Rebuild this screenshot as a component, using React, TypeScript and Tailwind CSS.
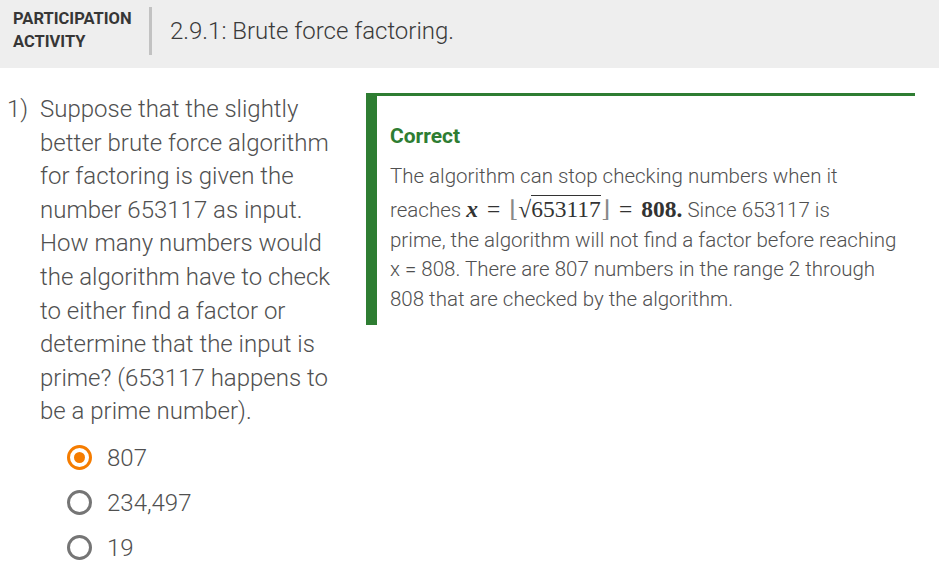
export default function App() {
  const options = [
    { label: '807', selected: true },
    { label: '234,497', selected: false },
    { label: '19', selected: false },
  ]

  return (
    <div className="w-[939px] h-[562px] bg-white overflow-hidden" style={{ fontFamily: 'Roboto, "Liberation Sans", sans-serif' }}>
      {/* Header */}
      <div className="h-[68px] bg-[#eeeeee] flex items-start">
        <div className="pl-[13px] pt-[7px] text-[16.5px] leading-[23px] font-bold text-[#363636] w-[149px]">
          PARTICIPATION
          <br />
          ACTIVITY
        </div>
        <div className="mt-[7px] w-[3px] h-[48px] bg-[#c2c2c2]" />
        <div className="ml-[18px] pt-[16px] text-[24px] leading-[30px] font-light text-[#3a3a3a]">
          2.9.1: Brute force factoring.
        </div>
      </div>

      {/* Body */}
      <div className="flex mt-[25px]">
        <div className="w-[366px] shrink-0 flex">
          <div className="w-[40px] pl-[7px] text-[24px] leading-[33.6px] font-light text-[#505050]">1)</div>
          <div className="w-[302px]">
            <p className="text-[24px] leading-[33.6px] font-light text-[#505050]">
              Suppose that the slightly better brute force algorithm for factoring is given the number 653117 as input. How many numbers would the algorithm have to check to either find a factor or determine that the input is prime? (653117 happens to be a prime number).
            </p>
            <div className="mt-[16px] ml-[27px] flex flex-col gap-[19px]">
              {options.map((o) => (
                <div key={o.label} className="flex items-center h-[26px]">
                  {o.selected ? (
                    <span className="w-[25px] h-[25px] rounded-full border-[3.5px] border-[#f57c00] flex items-center justify-center">
                      <span className="w-[11px] h-[11px] rounded-full bg-[#f57c00]" />
                    </span>
                  ) : (
                    <span className="w-[25px] h-[25px] rounded-full border-[3.5px] border-[#757575]" />
                  )}
                  <span className="ml-[15px] text-[24px] font-light text-[#505050]">{o.label}</span>
                </div>
              ))}
            </div>
          </div>
        </div>

        {/* Feedback */}
        <div className="w-[549px] h-[232px] border-t-[3px] border-l-[11px] border-[#2e7d32] pl-[13px] pr-[8px] pt-[26px]">
          <div className="text-[21px] leading-[28px] font-bold text-[#2e7d32]">Correct</div>
          <p className="mt-[12px] text-[20.5px] leading-[29.5px] font-light text-[#505050]">
            The algorithm can stop checking numbers when it reaches{' '}
            <span className="text-[23.5px] leading-[34px] text-[#333333] whitespace-nowrap" style={{ fontFamily: '"Liberation Serif", "DejaVu Serif", serif' }}>
              <span className="italic font-bold">x</span>
              <span className="mx-[9px] font-normal">=</span>
              <span className="font-normal text-[#888888]">⌊</span>
              <span className="font-normal">√</span>
              <span className="font-normal border-t border-[#333333]">653117</span>
              <span className="font-normal text-[#888888]">⌋</span>
              <span className="mx-[9px] font-normal">=</span>
              <span className="font-bold">808.</span>
            </span>{' '}
            Since 653117 is
            <br />
            prime, the algorithm will not find a factor before reaching x = 808. There are 807 numbers in the range 2 through 808 that are checked by the algorithm.
          </p>
        </div>
      </div>
    </div>
  )
}
